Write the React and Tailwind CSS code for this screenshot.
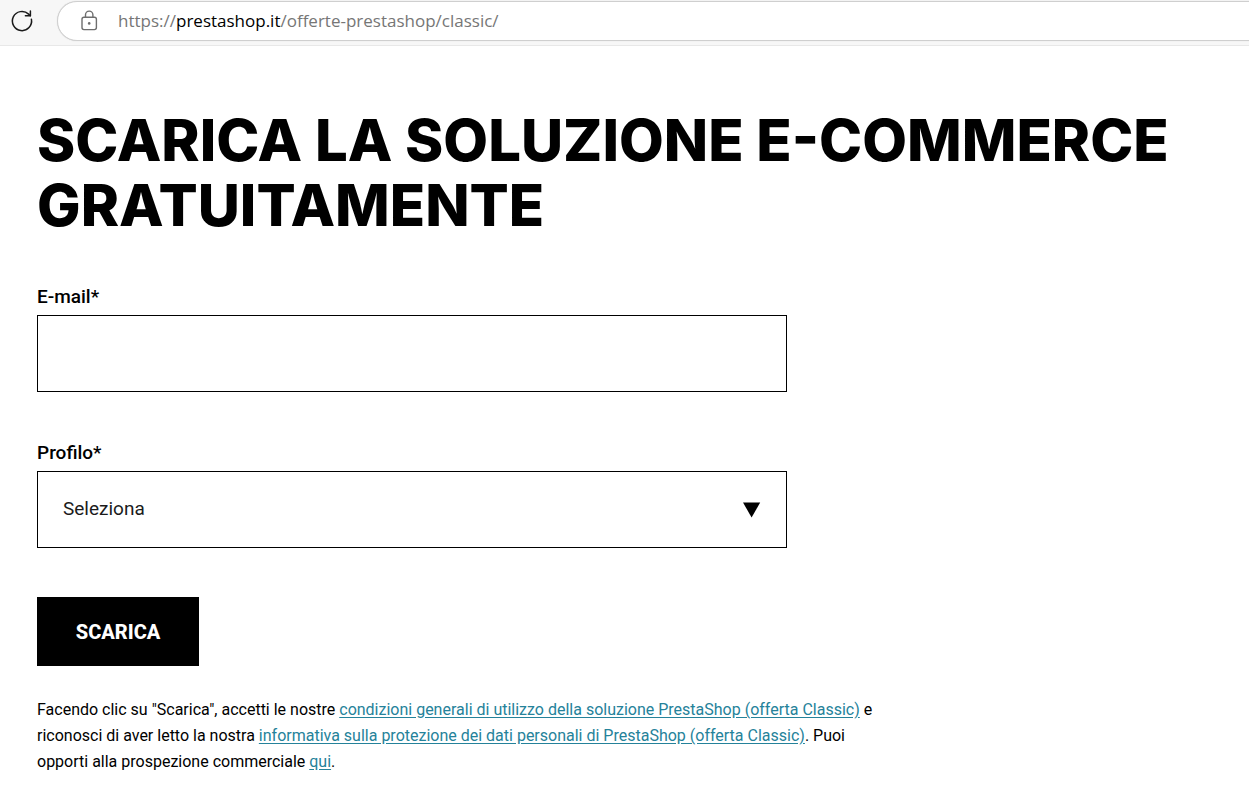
function ReloadIcon() {
  return (
    <svg width="24" height="24" viewBox="0 0 24 24" fill="none" stroke="#1b1b1b" strokeWidth="1.5" strokeLinecap="round" strokeLinejoin="round" aria-hidden="true">
      <path d="M21.4 10.2A9.6 9.6 0 1 1 18.6 5.1L20.3 6.8" />
      <path d="M20.4 1.9V6.8H15.4" />
    </svg>
  );
}

function LockIcon() {
  return (
    <svg className="shrink-0" width="18" height="22" viewBox="0 0 18 22" fill="none" stroke="#6e6e6e" strokeWidth="1.4" aria-hidden="true">
      <rect x="2" y="7.2" width="14.4" height="12.4" rx="2" />
      <path d="M5.5 7V4.8a3.7 3.7 0 0 1 7.4 0V7" />
      <circle cx="9.2" cy="13.4" r="1.3" fill="#6e6e6e" stroke="none" />
    </svg>
  );
}

function BrowserBar() {
  return (
    <header className="flex h-[46px] items-start overflow-hidden border-b border-[#e8e8e8] bg-[#f7f7f7] pt-px pl-2.5">
      <button type="button" aria-label="Aggiorna" className="mt-2 mr-[23px] shrink-0">
        <ReloadIcon />
      </button>
      <div className="-mr-8 flex h-10 flex-1 items-center gap-5 rounded-full border border-[#cfcfcf] bg-white pl-[22px] shadow-[0_0_1px_#cfcfcf]">
        <LockIcon />
        <span className="font-['Open_Sans','Noto_Sans',sans-serif] text-[17px] leading-6 whitespace-nowrap text-[#767676]">
          https://<span className="text-black">prestashop.it</span>/offerte-prestashop/classic/
        </span>
      </div>
    </header>
  );
}

const link = "text-[#25829a] underline underline-offset-2";

export default function App() {
  return (
    <div className="min-h-screen bg-white font-[Roboto,sans-serif] text-black">
      <BrowserBar />
      <main className="px-[37px] pt-[62px] pb-8">
        <h1 className="font-[Inter,sans-serif] text-[58px] leading-[65px] font-extrabold">
          SCARICA LA SOLUZIONE E-COMMERCE GRATUITAMENTE
        </h1>
        <form className="mt-[45px] max-w-[750px]" onSubmit={(e) => e.preventDefault()}>
          <label htmlFor="email" className="block pb-1 text-[19px] leading-7 font-medium">
            E-mail*
          </label>
          <input id="email" type="email" className="block h-[77px] w-full border border-black px-[25px] text-[19px] outline-none" />
          <label htmlFor="profile" className="mt-[47px] block pb-1 text-[19px] leading-7 font-medium">
            Profilo*
          </label>
          <div className="relative">
            <select id="profile" defaultValue="" className="block h-[77px] w-full appearance-none border border-black bg-white px-[25px] text-[19px] text-[#1b1b1b] outline-none">
              <option value="">Seleziona</option>
            </select>
            <svg className="pointer-events-none absolute top-1/2 right-[26px] -translate-y-1/2" width="18" height="16" viewBox="0 0 18 16" aria-hidden="true">
              <path d="M0 0.5h17.2L8.6 15.5z" />
            </svg>
          </div>
          <button type="submit" className="mt-[49px] h-[69px] min-w-[162px] bg-black px-9 text-[20px] font-extrabold text-white">
            SCARICA
          </button>
        </form>
        <p className="mt-[31px] max-w-[840px] text-base leading-[26px]">
          Facendo clic su "Scarica", accetti le nostre{" "}
          <a href="#condizioni" className={link}>condizioni generali di utilizzo della soluzione PrestaShop (offerta Classic)</a> e
          riconosci di aver letto la nostra{" "}
          <a href="#informativa" className={link}>informativa sulla protezione dei dati personali di PrestaShop (offerta Classic)</a>. Puoi
          opporti alla prospezione commerciale <a href="#opposizione" className={link}>qui</a>.
        </p>
      </main>
    </div>
  );
}
